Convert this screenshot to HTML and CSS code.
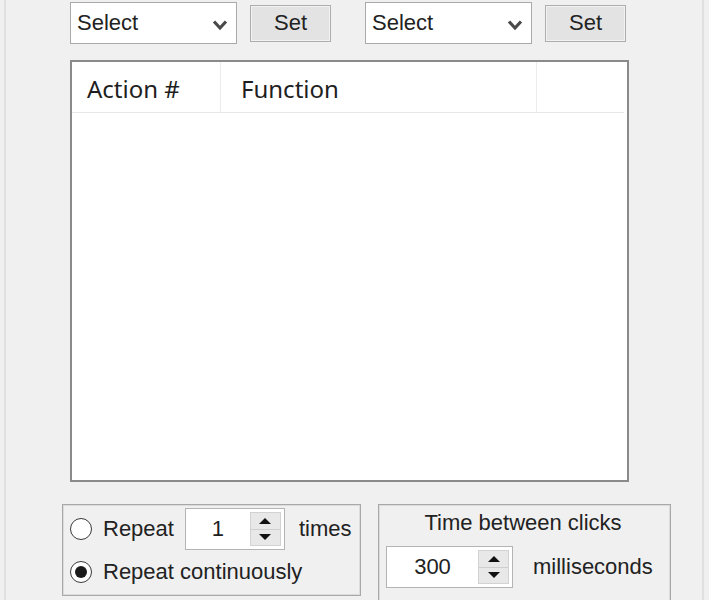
FILE: index.html
```html
<!DOCTYPE html>
<html>
<head>
<meta charset="utf-8">
<link rel="stylesheet" href="styles.css">
</head>
<body>
<div class="frame">
  <div class="toolbar">
    <div class="pair">
      <div class="select"><span class="select-text">Select</span><svg class="chev" width="16" height="12" viewBox="0 0 16 12"><path d="M2 2.5 L8 9 L14 2.5" fill="none" stroke="#4a4a4a" stroke-width="3.2"/></svg></div>
      <button class="btn">Set</button>
    </div>
    <div class="pair">
      <div class="select"><span class="select-text">Select</span><svg class="chev" width="16" height="12" viewBox="0 0 16 12"><path d="M2 2.5 L8 9 L14 2.5" fill="none" stroke="#4a4a4a" stroke-width="3.2"/></svg></div>
      <button class="btn">Set</button>
    </div>
  </div>

  <div class="list">
    <div class="list-head">
      <div class="col col-action">Action #</div>
      <div class="col col-func">Function</div>
      <div class="col col-rest"></div>
    </div>
  </div>

  <div class="bottom">
    <div class="group group-repeat">
      <div class="opt-row">
        <span class="radio"></span>
        <span class="lbl lbl-repeat">Repeat</span>
        <div class="spin spin-count">
          <div class="spin-value">1</div>
          <div class="spin-btns">
            <div class="spin-btn"><span class="tri-up"></span></div>
            <div class="spin-btn"><span class="tri-down"></span></div>
          </div>
        </div>
        <span class="lbl lbl-times">times</span>
      </div>
      <div class="opt-row">
        <span class="radio checked"></span>
        <span class="lbl lbl-repeat">Repeat continuously</span>
      </div>
    </div>
    <div class="group group-time">
      <div class="group-title">Time between clicks</div>
      <div class="time-row">
        <div class="spin spin-ms">
          <div class="spin-value">300</div>
          <div class="spin-btns">
            <div class="spin-btn"><span class="tri-up"></span></div>
            <div class="spin-btn"><span class="tri-down"></span></div>
          </div>
        </div>
        <span class="lbl lbl-ms">milliseconds</span>
      </div>
    </div>
  </div>
</div>
</body>
</html>
```

FILE: styles.css
```css
html, body {
  margin: 0;
  padding: 0;
}
body {
  background: #f0f0f0;
  width: 709px;
  height: 600px;
  overflow: hidden;
  font-family: "Liberation Sans", Arial, sans-serif;
  font-size: 22px;
  color: #222;
}
.frame {
  margin-left: 4px;
  width: 696px;
  height: 600px;
  border-left: 2px solid #e0e0e0;
  border-right: 2px solid #e0e0e0;
  padding-top: 2px;
  box-sizing: content-box;
}
.toolbar {
  display: flex;
  gap: 34px;
  padding-left: 64px;
}
.pair {
  display: flex;
  align-items: center;
  gap: 13px;
}
.select {
  width: 167px;
  height: 42px;
  box-sizing: border-box;
  border: 1px solid #a9a9a9;
  background: #fff;
  display: flex;
  align-items: center;
  justify-content: space-between;
  padding: 0 8px 0 6px;
}
.select-text {
  line-height: 1;
}
.chev {
  margin-top: 3px;
}
.btn {
  width: 81px;
  height: 37px;
  box-sizing: border-box;
  border: 1px solid #adadad;
  background: #e3e3e3;
  box-shadow: inset 0 0 0 1px #f2f2f2;
  font-family: "Liberation Sans", Arial, sans-serif;
  font-size: 22px;
  color: #222;
  padding: 0;
  margin: 0;
}
.list {
  margin-top: 16px;
  margin-left: 64px;
  width: 559px;
  height: 422px;
  box-sizing: border-box;
  border: 2px solid #8a8a8a;
  background: #fff;
}
.list-head {
  display: flex;
  height: 51px;
  box-sizing: border-box;
  border-bottom: 1px solid #e8e8e8;
  margin-right: 3px;
  font-family: "Noto Sans", "Open Sans", sans-serif;
  font-size: 24px;
  color: #1e1e1e;
}
.col {
  display: flex;
  align-items: center;
  padding-top: 2px;
  box-sizing: border-box;
  border-right: 1px solid #ececec;
}
.col-action {
  width: 149px;
  padding-left: 15px;
}
.col-func {
  width: 316px;
  padding-left: 20px;
}
.col-rest {
  flex: 1;
  border-right: none;
}
.bottom {
  display: flex;
  gap: 17px;
  margin-top: 22px;
  padding-left: 56px;
}
.group {
  box-sizing: border-box;
  border: 1px solid #a8a8a8;
  box-shadow: inset 0 0 0 1px #dcdcdc;
}
.group-repeat {
  width: 299px;
  height: 92px;
  padding: 3px 0 0 7px;
}
.group-time {
  width: 293px;
  height: 110px;
  padding: 0 0 0 7px;
}
.opt-row {
  display: flex;
  align-items: center;
  height: 42px;
}
.opt-row + .opt-row {
  margin-top: 1px;
}
.radio {
  width: 22px;
  height: 22px;
  box-sizing: border-box;
  border: 1px solid #3a3a3a;
  border-radius: 50%;
  background: #fff;
  display: flex;
  align-items: center;
  justify-content: center;
  flex: none;
}
.radio.checked::after {
  content: "";
  width: 12px;
  height: 12px;
  border-radius: 50%;
  background: #1a1a1a;
}
.lbl-repeat {
  margin-left: 11px;
}
.lbl-times {
  margin-left: 14px;
}
.spin {
  display: flex;
  height: 42px;
  box-sizing: border-box;
  border: 1px solid #b4b4b4;
  background: #fff;
  padding: 3px 3px 3px 0;
}
.spin-count {
  width: 100px;
  margin-left: 11px;
}
.spin-ms {
  width: 127px;
}
.spin-value {
  flex: 1;
  display: flex;
  align-items: center;
  justify-content: center;
  color: #222;
}
.spin-btns {
  width: 31px;
  display: flex;
  flex-direction: column;
  background: #e8e8e8;
  border: 1px solid #d2d2d2;
  box-sizing: border-box;
}
.spin-btn {
  flex: 1;
  display: flex;
  align-items: center;
  justify-content: center;
}
.spin-btn + .spin-btn {
  border-top: 1px solid #cfcfcf;
}
.tri-up {
  width: 0;
  height: 0;
  border-left: 6px solid transparent;
  border-right: 6px solid transparent;
  border-bottom: 6px solid #111;
}
.tri-down {
  width: 0;
  height: 0;
  border-left: 6px solid transparent;
  border-right: 6px solid transparent;
  border-top: 6px solid #111;
}
.group-title {
  height: 36px;
  display: flex;
  align-items: center;
  justify-content: center;
  margin-left: -10px;
}
.time-row {
  display: flex;
  align-items: center;
  margin-top: 5px;
}
.lbl-ms {
  margin-left: 20px;
}
```
